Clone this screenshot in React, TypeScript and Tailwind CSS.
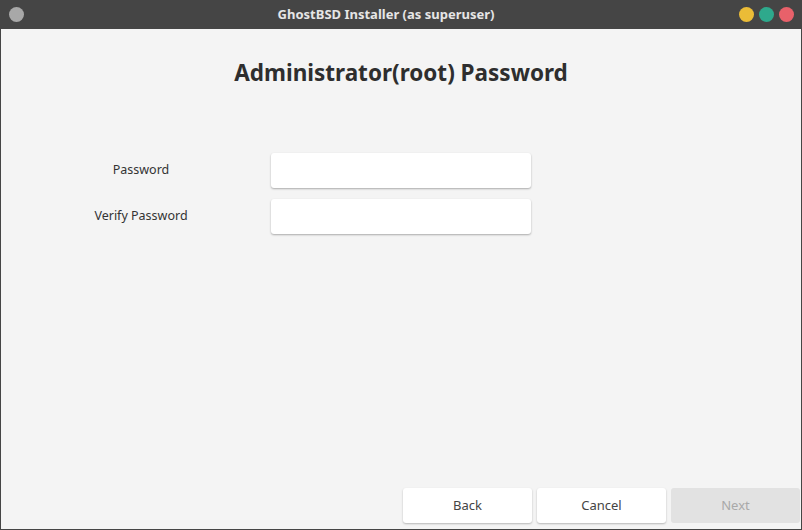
const font = { fontFamily: '"Noto Sans", "Open Sans", sans-serif' };

function Field({ label }: { label: string }) {
  return (
    <div className="flex items-center">
      <div className="ml-[40px] w-[200px] text-center text-[12.5px] text-[#333]">{label}</div>
      <input
        type="password"
        className="ml-[30px] h-[35px] w-[260px] rounded-[3px] bg-white shadow-[0_1px_2px_rgba(0,0,0,0.3)] outline-none"
      />
    </div>
  );
}

function Btn({ label, disabled }: { label: string; disabled?: boolean }) {
  return (
    <button
      disabled={disabled}
      className={
        disabled
          ? 'h-[35px] w-[129px] rounded-[3px] bg-[#e2e2e2] text-[13px] text-[#a9a9a9]'
          : 'h-[35px] w-[129px] rounded-[3px] bg-white text-[13px] text-[#444] shadow-[0_1px_2px_rgba(0,0,0,0.25)]'
      }
    >
      {label}
    </button>
  );
}

export default function App() {
  return (
    <div className="flex h-[530px] w-[802px] flex-col bg-[#454545]" style={font}>
      <div className="relative flex h-[29px] shrink-0 items-center justify-center pr-[30px]">
        <span className="absolute left-[9px] top-[7px] h-[15px] w-[15px] rounded-full bg-[#a8a8a8]" />
        <span className="text-[13px] font-bold text-[#e6e6e6]">GhostBSD Installer (as superuser)</span>
        <div className="absolute right-[8px] top-[7px] flex gap-[5px]">
          <span className="h-[15px] w-[15px] rounded-full bg-[#ebbc37]" />
          <span className="h-[15px] w-[15px] rounded-full bg-[#2ea98c]" />
          <span className="h-[15px] w-[15px] rounded-full bg-[#e8616a]" />
        </div>
      </div>
      <div className="mx-px mb-px flex flex-1 flex-col bg-[#f4f4f4]">
        <h1 className="mt-[29px] text-center text-[22.5px] font-bold leading-[30px] text-[#2e2e2e]">
          Administrator(root) Password
        </h1>
        <div className="mt-[65px] flex flex-col gap-[11px]">
          <Field label="Password" />
          <Field label="Verify Password" />
        </div>
        <div className="mt-auto mb-[6px] mr-px flex justify-end gap-[5px]">
          <Btn label="Back" />
          <Btn label="Cancel" />
          <Btn label="Next" disabled />
        </div>
      </div>
    </div>
  );
}
